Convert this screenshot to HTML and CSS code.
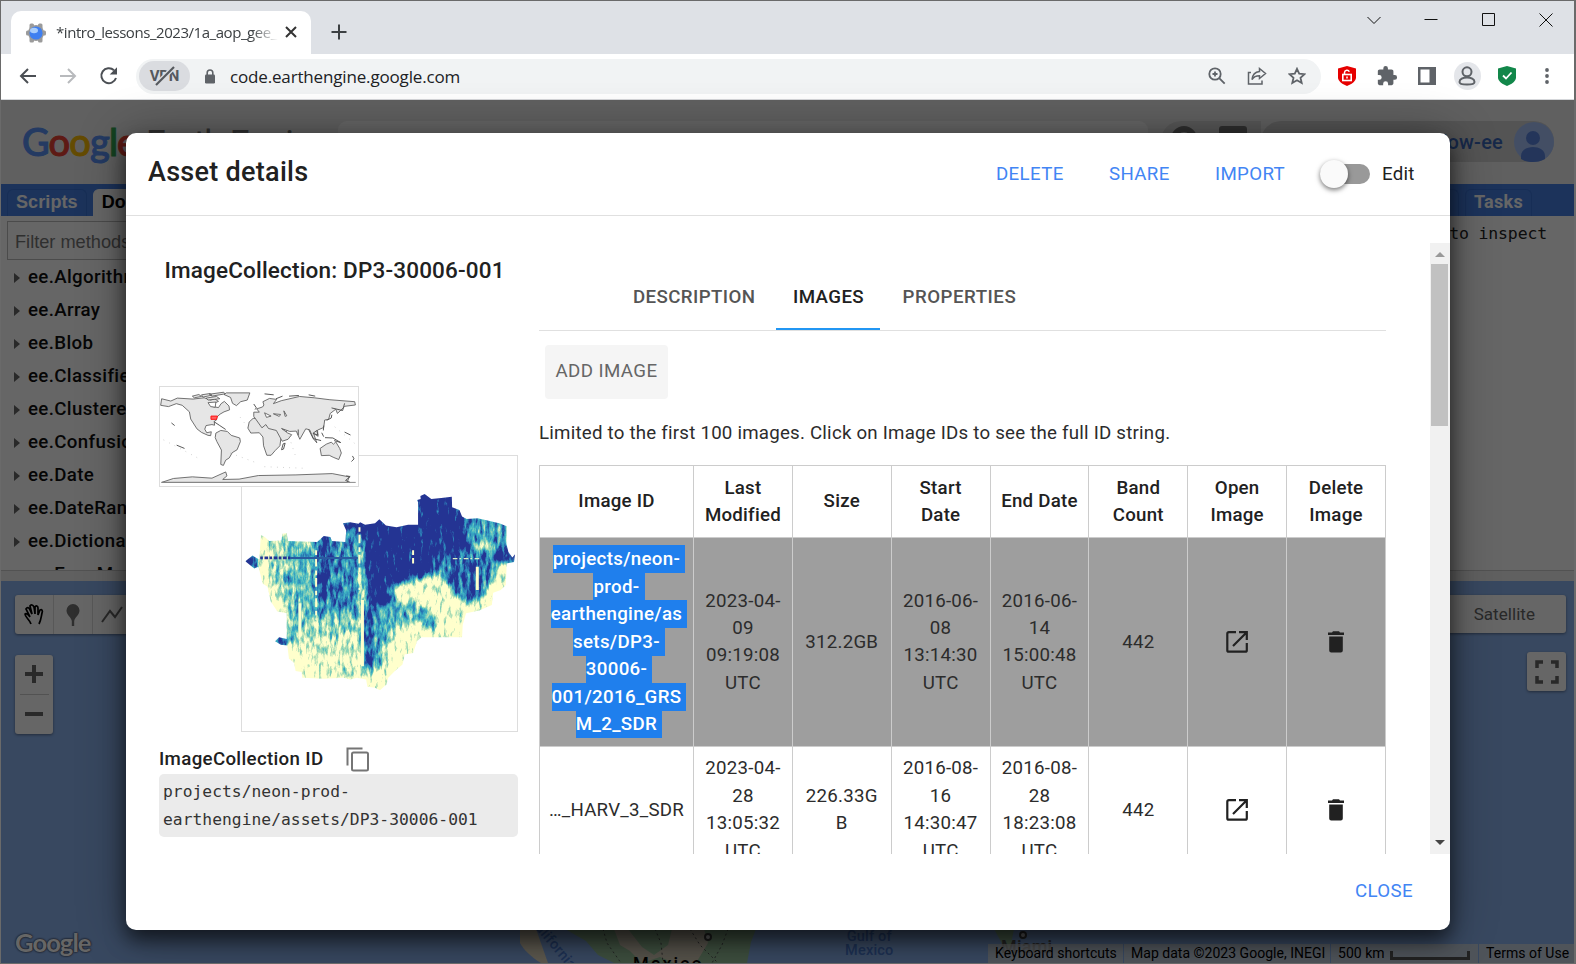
FILE: index.html
```html
<!DOCTYPE html>
<html lang="en">
<head>
<meta charset="utf-8">
<title>Earth Engine Code Editor</title>
<link rel="stylesheet" href="styles.css">
</head>
<body>
<div class="window">
  <div class="tabstrip">
    <div class="tab">
      <svg class="favicon" width="22" height="22" viewBox="0 0 22 22"><g fill="#9b9b9b"><rect x="4.500" y="1.500" width="4.500" height="19" rx="1.500"/><rect x="13" y="1.500" width="4.500" height="19" rx="1.500"/><rect x="1" y="8.500" width="20" height="5" rx="1.500"/><circle cx="11" cy="11" r="8"/></g><circle cx="11" cy="11" r="6.600" fill="#3f7ff0"/><ellipse cx="9" cy="8.500" rx="4" ry="2.800" fill="#a9cdfb"/></svg>
      <span class="tab-title">*intro_lessons_2023/1a_aop_gee_</span>
      <svg class="tab-close" width="12" height="12" viewBox="0 0 12 12" stroke="#333" stroke-width="2"><path d="M1 1l10 10M11 1L1 11"/></svg>
    </div>
    <svg class="newtab" width="16" height="16" viewBox="0 0 16 16" stroke="#3c4043" stroke-width="2"><path d="M8 0.500v15M0.500 8h15"/></svg>
    <div class="controls">
      <svg width="14" height="14" viewBox="0 0 14 14"><path d="M.5 4l6.500 6.500L13.500 4"/></svg>
      <svg width="14" height="14" viewBox="0 0 14 14"><path d="M0.500 6.500h13"/></svg>
      <svg width="14" height="14" viewBox="0 0 14 14"><path d="M.5.5h12v12H.5z"/></svg>
      <svg width="14" height="14" viewBox="0 0 14 14"><path d="M.5.5l13 13M13.500.5l-13 13"/></svg>
    </div>
  </div>
  <div class="toolbar">
    <div class="nav">
      <svg width="18" height="18" viewBox="0 0 18 18"><path d="M17 9H2M9 2L2 9l7 7"/></svg>
      <svg class="dim" width="18" height="18" viewBox="0 0 18 18"><path d="M1 9h15M9 2l7 7-7 7"/></svg>
      <svg width="20" height="20" viewBox="0 0 20 20"><path d="M17 12A7.500 7.500 0 1 1 15 4.200"/><path d="M18 1.200v7.300h-7.300z" fill="#4b4f54" stroke="none"/></svg>
    </div>
    <div class="omnibox">
      <div class="vpn">VPN<svg width="24" height="22" viewBox="0 0 24 22"><path d="M3 20L21 2" stroke="#dadce0" stroke-width="5"/><path d="M3 20L21 2" stroke="#55585d" stroke-width="2.200"/></svg></div>
      <svg class="lock" width="12" height="15" viewBox="0 0 12 15"><rect x="1" y="5.500" width="10" height="9" rx="1.200" fill="#5f6368"/><path d="M3.200 6V3.800a2.800 2.800 0 0 1 5.600 0V6" fill="none" stroke="#5f6368" stroke-width="1.600"/></svg>
      <span class="url">code.earthengine.google.com</span>
      <div class="box-icons">
        <svg width="18" height="18" viewBox="0 0 18 18"><circle cx="7" cy="7" r="5.700"/><path d="M11.200 11.200l5.500 5.500M4.500 7h5M7 4.500v5"/></svg>
        <svg width="20" height="18" viewBox="0 0 20 18" stroke-width="1.500"><path d="M4 5.500H1.500v11.500H15v-3.500"/><path d="M12.500 1.500l6 5-6 5V8.700C9 8.700 6.500 10 5 12.500c.4-4 3-7.500 7.500-8z"/></svg>
        <svg width="18" height="18" viewBox="0 0 18 18"><path d="M9 1.800l2.200 4.900 5.300.5-4 3.500 1.200 5.300L9 13.200 4.300 16l1.200-5.300-4-3.500 5.300-.5z"/></svg>
      </div>
    </div>
    <div class="ext">
      <span><svg width="18" height="20" viewBox="0 0 18 20"><path d="M9 0l9 2.500v9C18 15.500 13 18.500 9 20 5 18.500 0 15.500 0 11.500v-9z" fill="#e60000"/><rect x="4.800" y="8.500" width="8.400" height="6" fill="none" stroke="#fff" stroke-width="1.600"/><path d="M6.500 8.500V6.500a2.500 2.500 0 0 1 4.800-.8M9 10.500v2" fill="none" stroke="#fff" stroke-width="1.500"/></svg></span>
      <span><svg width="22" height="22" viewBox="0 0 24 24"><path fill="#5f6368" d="M20.500 11H19V7c0-1.100-.9-2-2-2h-4V3.500a2.500 2.500 0 0 0-5 0V5H4c-1.100 0-2 .9-2 2v3.800h1.500a2.700 2.700 0 0 1 0 5.400H2V20c0 1.100.9 2 2 2h3.800v-1.500a2.700 2.700 0 0 1 5.400 0V22H17c1.100 0 2-.9 2-2v-4h1.500a2.500 2.500 0 0 0 0-5z"/></svg></span>
      <span><svg width="18" height="18" viewBox="0 0 18 18"><path fill="#5f6368" d="M0 0h18v18H0z"/><path fill="#fff" d="M2.500 2.500h9v13h-9z"/></svg></span>
      <span class="profile"><svg width="18" height="20" viewBox="0 0 18 20" fill="none" stroke="#5f6368" stroke-width="2"><circle cx="9" cy="5.800" r="4.500"/><path d="M9 11.500c-4 0-7.500 1.800-7.500 4.500 0 2 3.500 2.600 7.500 2.600s7.500-.6 7.500-2.600c0-2.700-3.500-4.500-7.500-4.500z"/></svg></span>
      <span><svg width="18" height="20" viewBox="0 0 18 20"><path d="M9 0l9 2.500v9C18 15.500 13 18.500 9 20 5 18.500 0 15.500 0 11.500v-9z" fill="#12874a"/><path d="M5 9.500l3 3 5.500-6" fill="none" stroke="#fff" stroke-width="1.800"/></svg></span>
      <span><svg width="4" height="16" viewBox="0 0 4 16" fill="#5f6368"><circle cx="2" cy="2" r="1.900"/><circle cx="2" cy="8" r="1.900"/><circle cx="2" cy="14" r="1.900"/></svg></span>
    </div>
  </div>

  <div class="page">
    <div class="app">
      <header class="app-header">
        <div class="logo"><span class="b">G</span><span class="r">o</span><span class="y">o</span><span class="b">g</span><span class="g">l</span><span class="r">e</span></div>
        <div class="product">Earth Engine</div>
        <div class="search"></div>
        <div class="help"><i class="round"></i><i class="square"></i></div>
        <div class="account"><span>neon-flow-ee</span><svg width="40" height="40" viewBox="0 0 40 40"><circle cx="20" cy="20" r="20" fill="#a8c4fb"/><circle cx="19" cy="16" r="7" fill="#5b86e0"/><path d="M7 37v-3c0-6 6-9 12-9s12 3 12 9v3c-7 4-17 4-24 0z" fill="#5b86e0"/></svg></div>
      </header>
      <div class="tabbar">
        <span class="ptab">Scripts</span><span class="ptab active">Docs</span><span class="fill"></span><span class="ptab">Inspector</span><span class="ptab">Tasks</span>
      </div>
      <div class="panels">
        <div class="docs">
          <div class="filter">Filter methods...</div>
          <ul>
            <li>ee.Algorithms</li><li>ee.Array</li><li>ee.Blob</li><li>ee.Classifier</li><li>ee.Clusterer</li><li>ee.ConfusionMatrix</li><li>ee.Date</li><li>ee.DateRange</li><li>ee.Dictionary</li><li>ee.ErrorMargin</li>
          </ul>
        </div>
        <div class="console">to inspect</div>
      </div>
      <div class="splitter"></div>
      <div class="map">
        <svg class="land" width="700" height="34" viewBox="500 929 700 34">
          <path fill="#e6dcc4" d="M520 929h16l12 34h-7c-10-6-18-14-21-20z"/>
          <path fill="#98c39c" d="M565 929h191l-5 13-4 21H614l-16-8-12-14z"/>
          <path fill="#d5ccb9" d="M614 929h14l14 18 12 8 14-10 4-16h32l4 14-12 20h-22l-14-6-18 6-12-12-10-6z"/>
          <path fill="none" stroke="#555" stroke-dasharray="2 3" d="M603 929l4 14 14 20M655 929l6 14 2 20M690 929l10 16 18 18M728 929l-6 16-10 18"/>
          <path fill="#98c39c" d="M994 929h20l-4 20-6-2z"/>
          <circle cx="708" cy="937" r="3" fill="#ddd" stroke="#444" stroke-width="2"/><circle cx="1023" cy="935" r="3" fill="#ddd" stroke="#444" stroke-width="2"/>
        </svg>
        <span class="place california">California</span>
        <span class="place gulf">Gulf of<br>Mexico</span>
        <span class="place mexico">Mexico</span>
        <span class="place miami">Miami</span>
        <div class="tools">
          <i><svg width="22" height="24" viewBox="0 0 22 24" fill="none" stroke="#000" stroke-width="1.700"><path d="M8 21c-1-4-6-7-6-10 1-1 3 0 5 3L3 6c1-2 3-2 4 1l2 4-2-8c1-2 3-1 4 1l1 7V4c1-2 3-1 3 1v7l2-5c2-1 3 1 2 3-1 5-1 7-3 11"/></svg></i>
          <i><svg width="14" height="22" viewBox="0 0 14 22"><path d="M7 0a6.500 6.500 0 0 1 6.500 6.500C13.500 11 9 13 8.200 17v5H5.800v-5C5 13 .5 11 .5 6.500A6.500 6.500 0 0 1 7 0z" fill="#747474"/></svg></i>
          <i><svg width="22" height="18" viewBox="0 0 22 18" fill="none" stroke="#666" stroke-width="2"><path d="M1 16L9 5l5 6L21 1"/></svg></i>
        </div>
        <div class="zoom"><i><svg width="18" height="18" viewBox="0 0 18 18"><path fill="#666" d="M7 0h4v7h7v4h-7v7H7v-7H0V7h7z"/></svg></i><i><svg width="18" height="18" viewBox="0 0 18 18"><path fill="#666" d="M0 7h18v4H0z"/></svg></i></div>
        <div class="satellite">Satellite</div>
        <div class="fullscreen"><svg width="24" height="24" viewBox="0 0 24 24" fill="none" stroke="#666" stroke-width="3.500"><path d="M2 8V2h6M16 2h6v6M22 16v6h-6M8 22H2v-6"/></svg></div>
        <div class="map-logo">Google</div>
        <div class="attribution"><span class="a1">Keyboard shortcuts</span><span class="a2">Map data ©2023 Google, INEGI</span><span class="a3">500 km<i></i></span><span class="a4">Terms of Use</span></div>
      </div>
    </div>
    <div class="backdrop"></div>

    <section class="modal">
      <header class="modal-header">
        <h1>Asset details</h1>
        <a class="m-delete">DELETE</a><a class="m-share">SHARE</a><a class="m-import">IMPORT</a>
        <span class="switch"><i></i></span><span class="edit">Edit</span>
      </header>
      <div class="content">
        <aside>
          <h2>ImageCollection: DP3-30006-001</h2>
          <div class="previews">
            <svg class="preview" width="277" height="277" viewBox="333 255 831 831">
              <defs>
                <clipPath id="site"><path d="M390 494l12 6 13 12 37-2 3-20 13-2 4 24 88 3 20-18 20 3 5 12 40 3 3-35-10-22 22-3 25 5 5-5 15 8 30-5 13-12 20 19 32 5 35-7h30v-68l-3-7 11-3-1-9 13-6 20 15 30-3 32-4 1 32 22 8 8 20 14 7 33-2 30 7 35 8 23 9-1 53 6 25 12 17 8-10-3 23-22 5-3 65-15 15-23 8-4 37-38 17-40 8-10 35-2 38H875l-13 12-12 35-25 5-7 30-23 20-20 20-5 20-20 18-15-8-23-3-4-22-28-5-20 5-20-5-60 3-65-3-2-17-18-3-5-25-15-12-5-40-20-3-17-10 12-12 23 5v-78l-28-5-20-30-10-45-15-10-12-50-13 5-27-22 22-17 20 12z"/></clipPath>
                <filter id="relief" filterUnits="userSpaceOnUse" x="333" y="355" width="831" height="620" color-interpolation-filters="sRGB">
                  <feGaussianBlur in="SourceGraphic" stdDeviation="10" result="base"/>
                  <feTurbulence type="fractalNoise" baseFrequency="0.085 0.028" numOctaves="4" seed="8"/>
                  <feColorMatrix values="1 0 0 0 0 1 0 0 0 0 1 0 0 0 0 0 0 0 0 1" result="noise"/>
                  <feComposite in="base" in2="noise" operator="arithmetic" k2="1.300" k3="1.500" k4="-.85"/>
                  <feComponentTransfer>
                    <feFuncR type="table" tableValues="1 .63 .25 .17 .145"/>
                    <feFuncG type="table" tableValues="1 .855 .714 .5 .204"/>
                    <feFuncB type="table" tableValues=".8 .706 .769 .72 .58"/>
                  </feComponentTransfer>
                </filter>
              </defs>
              <g clip-path="url(#site)"><g filter="url(#relief)">
                <path fill="#000" d="M300 300h900v700H300z"/>
                <path fill="#444" d="M415 480h150v230h-95l-50-20z"/>
                <path fill="#6a6a6a" d="M470 530h90v290h-90z"/>
                <path fill="#9a9a9a" d="M560 440h130v300H555z"/>
                <path fill="#4c4c4c" d="M520 730h190v80H480z"/>
                <path fill="#ddd" d="M560 490h35v210h-35zM330 550h52v50h-52zM430 795h38v40h-38z"/>
                <path fill="#fff" d="M640 430h60v50h-60zM690 430h340l20 70-120 40-40 80-110 30 30 70-45 25h-50zM855 350h140l40 190-160 90z"/>
                <path fill="#aaa" d="M900 540h230l-40 80-40 80-60-10-50-70z"/>
                <path fill="#8a8a8a" d="M1010 430h130v90h-130z"/>
                <path fill="#ddd" d="M960 540h25v130h-25zM1020 560h20v140h-20zM1100 520h70v60h-70z"/>
                <path fill="#7c7c7c" d="M700 710l130-15 90 30v60l-60-30-70 10-40 140h-55z"/>
                <path fill="#ddd" d="M700 710h28v180h-28z"/>
                <path fill="#1c1c1c" d="M540 800h150v125h-60l-90-40z"/>
              </g>
              <path fill="none" stroke="#ffc" stroke-width="9" d="M697 690v200M508 700v100M1044 590v70"/>
              <path fill="none" stroke="#ffc" stroke-width="6" stroke-dasharray="14 9 26 12" d="M688 470v190M557 540v210M850 540v40"/>
              <path fill="none" stroke="#253494" stroke-width="8" stroke-dasharray="8 5 11 4" d="M388 563h90"/>
              <path fill="none" stroke="#2a5aa0" stroke-width="6" d="M478 563h205"/>
              <path fill="none" stroke="#d9efc5" stroke-width="4" stroke-dasharray="14 6 5 8" d="M970 565h80"/>
              </g>
            </svg>
            <svg class="world" width="200" height="101" viewBox="88 48 600 303">
              <g fill="#e6e6e6" stroke="#555" stroke-width="2.500" stroke-linejoin="round">
                <path d="M90 84l28 7 20-9 48 3 34-4 20 7 12-4 12 8-20 8 2 8 18 3 8-12 10-7 14 14 2 12-17 6-12 7-10 9-1 9-7 4 1 12-8-2-18 3-4 11 6 11 14-3-2 12-8-1-20-9-14-11-19-30-4-22-22-20-18-5-24 9-24-4z"/>
                <path d="M288 66l72 0-8 22-20 5-13 12-12-7-6-18-20-9z"/>
                <path d="M184 76l20-5 8 6-22 4zM212 72l26-4 6 5-28 6zM236 70l44-6 4 5-40 7zM226 82l32-5 10 7-36 4z"/>
                <path d="M256 189l15-8 20 3 12 12 26 8 2 11-10 25-15 9-9 16-11 7-7 16-8-3 2-44-14-26-5-12z"/>
                <path d="M370 144h34l20 8 20-2 14 27 18 2-21 27-3 22-14 14-13 15h-13l-10-29-2-27-11-13-26 1-9-15 4-19z"/>
                <path d="M372 138v-13h17l-8-10 18-6 4-6-3-10 20-10 22 3-10 13 24-9 56-13 45 4 48 6 76 6 2 10-32 4-23 22-5-13-17 13-5 18-12 2-3 23-19 8 2 19-14-9 10 29-10-12-12-28-12-3-18 32-11-25-20 1-25-9 19 14 12 5-11 14-18 6-18-33-24-6-8-12-12 10z"/>
                <path d="M575 236l19-13 15-6 7 6 7-7 12 20 5 14-8 20-17-7-12-6-24 1z"/>
                <path d="M90 340l36-12 58-5 60 4 42-19 4 12-13 11 50-1 59-11 115-2 111-4 52 10-6 17z"/>
              </g>
              <path fill="#fff" stroke="#555" stroke-width="2.500" d="M232 96l24-2-2 16-14-2zM405 127l20 10-14 4zM432 130l22 2-4 6zM464 121l9 15-5 2z"/>
              <path fill="none" stroke="#555" stroke-width="3" d="M372 100l8 12-4 5M457 240l5-18 6-2-5 18zM540 178l14 28 24 6M553 190l12-9 3 14zM580 188l6 12M586 166l-1 15M590 203l24 1 24 14-20-6M595 150l14-7 2-10M610 112l34 8 6-22M671 276l8-8-5-9M250 154l18 12 18 12M405 69l28 3M480 76l30-2M540 72l20 4M440 84l20-8M655 320l12 2-14 12 14 6M508 178v18M120 158l10 8M136 226l24 10M650 186l18 9"/>
              <path stroke="#888" stroke-width="3" d="M90 340h594"/>
              <path fill="none" stroke="#999" stroke-width="2" stroke-dasharray="2 17" d="M96 210l50 26 60 32M330 140l30 40M300 250l80 30M480 200l20 60M620 170l60 50M405 292l130 5"/>
              <path fill="#ff6262" stroke="#f11" stroke-width="3" d="M241 137h20l-3 10h-17z"/>
            </svg>
          </div>
          <div class="idrow"><b>ImageCollection ID</b><svg width="24" height="26" viewBox="0 0 24 26" fill="none" stroke="#757575" stroke-width="2"><path d="M1.500 19.500v-17h15"/><rect x="6" y="6.500" width="16" height="18" rx="1.500"/></svg></div>
          <div class="idbox">projects/neon-prod-<br>earthengine/assets/DP3-30006-001</div>
        </aside>
        <main>
          <nav class="tabs"><span class="t1">DESCRIPTION</span><span class="t2">IMAGES</span><span class="t3">PROPERTIES</span></nav>
          <button class="add">ADD IMAGE</button>
          <p>Limited to the first 100 images. Click on Image IDs to see the full ID string.</p>
          <table>
            <colgroup><col class="c-id"><col><col><col><col><col><col><col></colgroup>
            <tr><th>Image ID</th><th>Last<br>Modified</th><th>Size</th><th>Start<br>Date</th><th>End Date</th><th>Band<br>Count</th><th>Open<br>Image</th><th>Delete<br>Image</th></tr>
            <tr class="sel">
              <td class="full"><span>projects/neon-</span><br><span>prod-</span><br><span>earthengine/as</span><br><span>sets/DP3-</span><br><span>30006-</span><br><span>001/2016_GRS</span><br><span>M_2_SDR</span></td>
              <td>2023-04-<br>09<br>09:19:08<br>UTC</td><td>312.2GB</td><td>2016-06-<br>08<br>13:14:30<br>UTC</td><td>2016-06-<br>14<br>15:00:48<br>UTC</td><td>442</td>
              <td><svg class="open" width="22" height="22" viewBox="0 0 22 22"><path d="M10 1.200H2.800a1.500 1.500 0 0 0-1.500 1.500v16.500a1.500 1.500 0 0 0 1.500 1.500h16.500a1.500 1.500 0 0 0 1.500-1.500V12M13 1.200h7.800V9M20.500 1.500L7 15"/></svg></td>
              <td><svg width="16" height="22" viewBox="0 0 16 22" fill="#212121"><path d="M1.200 5.500h13.600V19.500a2 2 0 0 1-2 2H3.200a2 2 0 0 1-2-2zM0 1.500h4l1-1.200h6l1 1.200h4v2.400H0z"/></svg></td>
            </tr>
            <tr class="next">
              <td>…_HARV_3_SDR</td><td>2023-04-<br>28<br>13:05:32<br>UTC</td><td>226.33G<br>B</td><td>2016-08-<br>16<br>14:30:47<br>UTC</td><td>2016-08-<br>28<br>18:23:08<br>UTC</td><td>442</td>
              <td><svg class="open" width="22" height="22" viewBox="0 0 22 22"><path d="M10 1.200H2.800a1.500 1.500 0 0 0-1.500 1.500v16.500a1.500 1.500 0 0 0 1.500 1.500h16.500a1.500 1.500 0 0 0 1.500-1.500V12M13 1.200h7.800V9M20.500 1.500L7 15"/></svg></td>
              <td><svg width="16" height="22" viewBox="0 0 16 22" fill="#212121"><path d="M1.200 5.500h13.600V19.500a2 2 0 0 1-2 2H3.200a2 2 0 0 1-2-2zM0 1.500h4l1-1.200h6l1 1.200h4v2.400H0z"/></svg></td>
            </tr>
          </table>
        </main>
        <div class="scrollbar"><i class="up"></i><i class="thumb"></i><i class="down"></i></div>
      </div>
      <footer><a>CLOSE</a></footer>
    </section>
  </div>
</div>
</body>
</html>
```
FILE: styles.css
```css
* { box-sizing: border-box; }
body { margin: 0; font-family: Roboto, sans-serif; font-size: 18.7px; letter-spacing: .22px; color: #212121; }
i { font-style: normal; }
.window { width: 1576px; height: 964px; border: 1px solid #6a6a6a; border-right-width: 2px; overflow: hidden; background: #fff; }
.tabstrip { height: 53px; background: #dee1e6; display: flex; align-items: flex-start; padding: 10px 0 0 10px; }
.tab { width: 300px; height: 43px; background: #fff; border-radius: 10px 10px 0 0; display: flex; align-items: center; padding-left: 14px; }
.tab-title { width: 222px; margin: 0 7px 2px 9px; overflow: hidden; white-space: nowrap; font: 15px "Open Sans", sans-serif; letter-spacing: -.45px; -webkit-mask-image: linear-gradient(90deg, #000 88%, transparent); mask-image: linear-gradient(90deg, #000 88%, transparent); color: #3c4043; }
.tab-close { margin-bottom: 1px; }
.newtab { margin: 13px 0 0 20px; }
.controls { margin-left: auto; display: flex; gap: 43.300px; padding: 2px 21px 0 0; }
.controls svg { fill: none; stroke: #111; stroke-width: 1; }
.toolbar { height: 46px; display: flex; align-items: center; background: #fff; border-bottom: 1px solid #d5d7da; padding: 0 0 1px 18px; }
.nav { display: flex; gap: 22px; align-items: center; width: 117px; fill: none; stroke: #4b4f54; stroke-width: 2; }
.nav .dim { stroke: #b8babd; }
.omnibox { width: 1185px; height: 35px; border-radius: 18px; background: #f1f3f4; display: flex; align-items: center; padding-left: 3px; }
.vpn { position: relative; width: 51px; height: 30px; border-radius: 15px; background: #dadce0; text-align: center; line-height: 30px; font-weight: 700; font-size: 15px; letter-spacing: -.2px; color: #55585d; }
.vpn > svg { position: absolute; left: 14px; top: 4px; }
.lock { margin: 0 14px 0 14px; }
.url { font: 17px "Open Sans", sans-serif; letter-spacing: -.16px; color: #202124; }
.box-icons { margin-left: auto; display: flex; gap: 21px; padding-right: 15px; fill: none; stroke: #5f6368; stroke-width: 1.800; }
.ext { display: flex; padding-left: 6px; }
.ext span { width: 40px; height: 28px; display: grid; place-items: center; }
.ext .profile { width: 27px; margin: 0 6.500px; border-radius: 50%; background: #e4e6ea; }

.page { position: relative; height: 863px; }
.app { height: 863px; display: flex; flex-direction: column; overflow: hidden; background: #fff; }
.app-header { height: 84px; background: #f1f1f1; display: flex; padding: 21px 20px 0 21px; flex: none; }
.logo { margin-top: -3px; font: 38px/46px Lato, sans-serif; font-weight: 500; letter-spacing: -.9px; width: 124px; white-space: nowrap; -webkit-text-stroke: 1px; }
.b { color: #5a92f5; } .r { color: #ea4335; } .y { color: #fbbc05; } .g { color: #34a853; }
.product { font-size: 35px; line-height: 45px; color: #757575; width: 192px; white-space: nowrap; letter-spacing: -1.200px; }
.search { width: 810px; height: 41px; border-radius: 9px; background: #fff; }
.help { margin-left: 13px; width: 100px; height: 41px; border-radius: 20px 0 0 20px; background: #dcdcdc; display: flex; gap: 22px; padding: 5px 10px; }
.help i { background: #777; } .help .round { width: 26px; height: 26px; border-radius: 50%; background: none; border: 6px solid #777; } .square { width: 28px; height: 26px; border-radius: 3px; }
.account { flex: 1; height: 41px; border-radius: 20px; background: #d2d2d2; display: flex; justify-content: flex-end; align-items: center; gap: 11px; font-weight: 500; font-size: 20px; color: #3b66b8; }
.tabbar { height: 32px; background: #4680e4; display: flex; align-items: flex-end; padding: 0 42px 0 6px; flex: none; gap: 6px; }
.fill { flex: 1; }
.ptab { height: 27px; border: 1px solid #3b74d6; border-bottom: 0; border-radius: 6px 6px 0 0; color: #fff; font: 700 18px/24px Roboto, sans-serif; padding: 0 8px; letter-spacing: .3px; }
.ptab:first-child, .ptab.active { font-family: "Liberation Sans", sans-serif; letter-spacing: .1px; line-height: 25px; }
.ptab.active { background: #fff; border-color: #fff; color: #000; }
.panels { height: 354px; display: flex; justify-content: space-between; flex: none; overflow: hidden; }
.docs { width: 330px; padding: 5px 6px; }
.filter { height: 39px; border: 1px solid #bbb; padding-left: 7px; font: 18.200px/40px "Liberation Sans", sans-serif; letter-spacing: 0; color: #777; }
.docs ul { list-style: none; margin: 1px 0 0; padding: 0; font-weight: 500; font-size: 18.700px; color: #111; letter-spacing: .35px; }
.docs li { height: 33px; line-height: 33px; padding-left: 7px; white-space: nowrap; }
.docs li::before { content: ""; display: inline-block; border: solid transparent; border-width: 5px 0 5px 6px; border-left-color: #666; margin-right: 8px; }
.console { font: 16.500px "DejaVu Sans Mono", monospace; letter-spacing: -.15px; padding: 8px 27px 0 0; }
.splitter { height: 11px; background: #f0f0f0; border-top: 1px solid #ccc; flex: none; }
.map { position: relative; flex: 1; background: #8cb4f0; color: #666; }
.land, .place, .tools, .zoom, .satellite, .fullscreen, .map-logo, .attribution { position: absolute; }
.land { left: 499px; bottom: 0; }
.place { color: #4a7ad0; font-size: 14.500px; font-weight: 500; line-height: 14px; text-align: center; }
.california { left: 519px; bottom: 13px; transform: rotate(50deg); }
.gulf { left: 844px; bottom: 5px; }
.mexico { left: 632px; bottom: -8px; color: #000; font-size: 18px; letter-spacing: 2px; }
.miami { left: 1000px; bottom: 9px; font-size: 18px; color: #555; }
.tools { left: 14px; top: 14px; display: flex; background: #fff; border-radius: 3px; height: 39px; box-shadow: 0 1px 3px #0006; }
.tools i { width: 39px; display: grid; place-items: center; border-right: 1px solid #ddd; }
.zoom { left: 14px; top: 74px; width: 38px; height: 79px; border-radius: 3px; background: #fff; display: grid; grid-template-rows: 39px 40px; justify-items: center; box-shadow: 0 1px 3px #0006; }
.zoom i { width: 29px; display: grid; place-items: center; padding-bottom: 1px; }
.zoom i + i { border-top: 1px solid #ccc; padding-bottom: 2px; }
.satellite { right: 8px; top: 14px; width: 160px; height: 38px; border-radius: 3px; background: #fff; text-align: right; padding-right: 31px; font-size: 17px; letter-spacing: .05px; line-height: 38px; box-shadow: 0 1px 3px #0006; }
.fullscreen { right: 8px; top: 71px; width: 39px; height: 39px; border-radius: 3px; background: #fff; display: grid; place-items: center; box-shadow: 0 1px 3px #0006; }
.map-logo { left: 14px; bottom: 6px; color: #fff; font: 700 25.500px/30px Lato, sans-serif; letter-spacing: -.9px; text-shadow: 0 0 2px #334, 0 0 2px #334; }
.attribution { right: 0; bottom: 0; height: 19px; display: flex; color: #000; font-size: 14px; line-height: 19px; white-space: nowrap; }
.attribution span { background: #ddddddb8; padding-left: 7px; margin-left: 1px; letter-spacing: .02px; }
.a1 { width: 135px; } .a2 { width: 206px; } .a3 { width: 147px; display: flex; } .a4 { width: 95px; }
.a3 i { width: 80px; height: 9px; border: 3px solid #555; border-top: 0; margin: 7px 0 0 5px; }
.backdrop { position: absolute; inset: 0; background: #0009; }

.modal { position: absolute; left: 125px; top: 33px; width: 1324px; height: 797px; background: #fff; border-radius: 10px; overflow: hidden; box-shadow: 0 10px 20px #0009, 0 2px 50px #0005; display: flex; flex-direction: column; }
.modal-header { height: 83px; flex: none; border-bottom: 1px solid #e0e0e0; display: flex; align-items: center; padding: 0 36px 1px 22px; }
h1 { font-size: 27px; font-weight: 500; margin: 0 auto 3px 0; letter-spacing: .28px; }
a { color: #4285f4; white-space: nowrap; letter-spacing: .35px; }
.m-delete { width: 113px; } .m-share { width: 106px; } .m-import { width: 105px; }
.switch { width: 50px; height: 20px; border-radius: 10px; background: #999; }
.switch i { display: block; width: 28px; height: 28px; border-radius: 50%; background: #fafafa; box-shadow: 0 2px 5px #0008; margin-top: -4px; }
.edit { margin-left: 12px; width: 32px; white-space: nowrap; }
.content { margin-top: 27px; height: 611px; flex: none; display: flex; overflow: hidden; }
aside { width: 413px; padding: 13px 21px 0 33px; flex: none; }
h2 { margin: 0 0 0 5.500px; font-size: 22.500px; font-weight: 500; line-height: 28px; letter-spacing: .17px; white-space: nowrap; }
.previews { margin-top: 102px; display: grid; width: 359px; height: 346px; }
.world, .preview { grid-area: 1 / 1; background: #fff; border: 1px solid #ddd; }
.preview { align-self: end; justify-self: end; }
.idrow { height: 42px; display: flex; align-items: center; gap: 23px; padding-top: 12px; }
.idrow b { font-weight: 500; white-space: nowrap; letter-spacing: .33px; }
.idbox { width: 359px; height: 63px; background: #ebebeb; border-radius: 5px; padding: 4px; font: 16.300px/28px "DejaVu Sans Mono", monospace; letter-spacing: .03px; color: #333; white-space: nowrap; }
main { width: 891px; flex: none; }
.tabs { width: 847px; height: 88px; border-bottom: 1px solid #e0e0e0; display: flex; padding-left: 77px; font-weight: 500; letter-spacing: .4px; color: #555; }
.tabs span { height: 87px; line-height: 108px; padding-left: 17px; white-space: nowrap; }
.t1 { width: 160px; } .tabs .t2 { width: 104px; color: #212121; border-bottom: 2px solid #2196f3; } .tabs .t3 { padding-left: 22.500px; letter-spacing: .5px; }
.add { display: block; margin: 14px 0 0 6px; width: 123px; height: 54px; border: 0; border-radius: 4px; background: #f5f5f5; color: #666; font: 18.700px Roboto, sans-serif; letter-spacing: .4px; padding: 0 0 2px; white-space: nowrap; }
p { margin: 20px 0 18px; line-height: 28px; letter-spacing: .225px; white-space: nowrap; color: #2c2c2c; }
table { width: 847px; table-layout: fixed; border-collapse: collapse; line-height: 27.430px; text-align: center; letter-spacing: .24px; }
.c-id { width: 154px; }
th, td { border: 1px solid #ccc; padding: 8.500px 0 7.500px; }
th { font-weight: 500; }
td { color: #2c2c2c; }
td svg { display: block; margin: 0 auto; }
.sel { background: #9e9e9e; }
.full { font-weight: 500; color: #fff; letter-spacing: .33px; }
.full span { background: #1f7fed; padding: 3px 5px 3px 0; margin-right: -5px; }
.open { fill: none; stroke: #212121; stroke-width: 2.200; }
.scrollbar { width: 20px; background: #f1f1f1; display: flex; flex-direction: column; align-items: center; padding: 9px 1px 9px 0; }
.up { border: solid transparent; border-width: 0 5px 5px; border-bottom-color: #999; margin-bottom: 7px; }
.thumb { width: 17px; height: 162px; background: #c1c1c1; }
.down { border: solid transparent; border-width: 5px 5px 0; border-top-color: #444; margin-top: auto; }
footer { flex: 1; display: flex; justify-content: flex-end; padding: 26px 37px 0; }
```
